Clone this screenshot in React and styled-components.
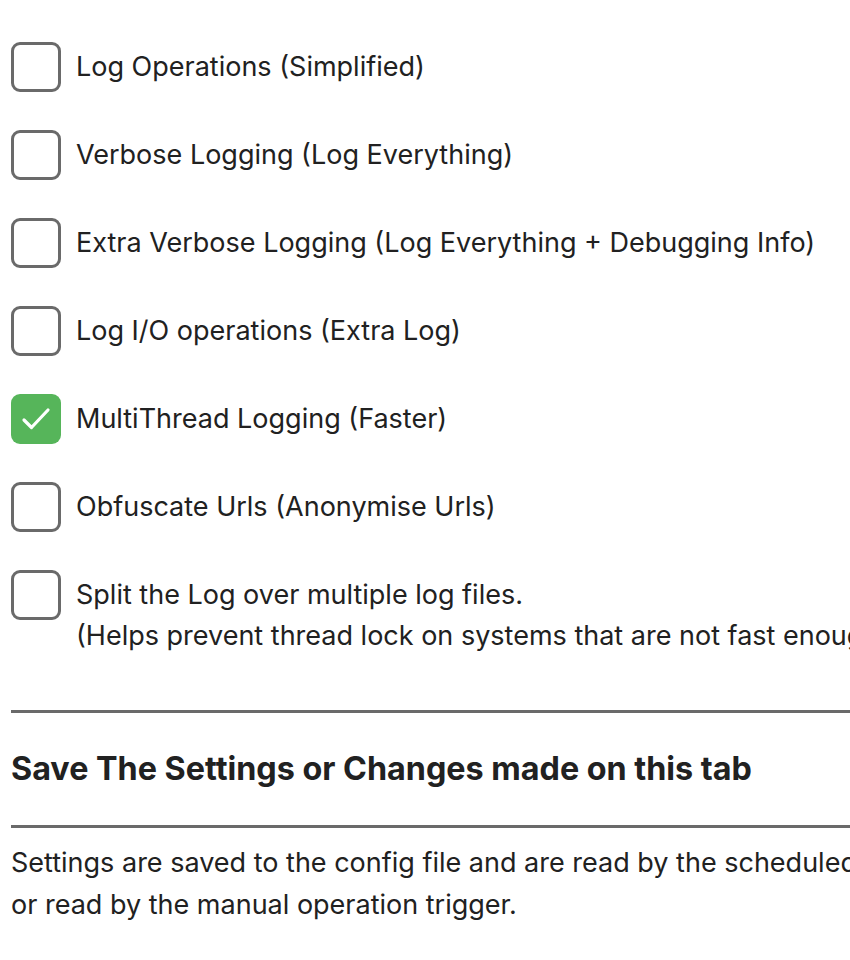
import React from "react"
import styled, { createGlobalStyle } from "styled-components"

const Global = createGlobalStyle`
  html, body {
    margin: 0;
    padding: 0;
    overflow: hidden;
    background: #fff;
  }
  body {
    font-family: Inter, "Noto Sans", "Liberation Sans", sans-serif;
    color: #212121;
  }
`

const Page = styled.div`
  width: 1300px;
  padding: 42px 0 0 11px;
`

const Options = styled.div`
  display: grid;
  grid-gap: 38px;
`

const Row = styled.label`
  display: flex;
  align-items: flex-start;
  gap: 15px;
`

const Box = styled.span`
  flex: none;
  box-sizing: border-box;
  width: 50px;
  height: 50px;
  border-radius: 9px;
  border: ${(p) => (p.checked ? "none" : "3px solid #6a6a6a")};
  background: ${(p) => (p.checked ? "#56b55a" : "#fff")};
  display: flex;
  align-items: center;
  justify-content: center;
`

const Text = styled.span`
  font-size: 27px;
  line-height: 41px;
  padding-top: 4px;
  white-space: nowrap;
`

const Rule = styled.hr`
  margin: ${(p) => (p.spaced ? "54px 0 0" : "0")};
  border: none;
  height: 3px;
  background: #6a6a6a;
`

const Heading = styled.h2`
  margin: 0;
  font-size: 32.3px;
  font-weight: 700;
  line-height: 112px;
`

const Para = styled.p`
  margin: 14px 0 0;
  font-size: 27px;
  line-height: 42px;
`

const Check = () => (
  <svg width="34" height="34" viewBox="0 0 34 34" fill="none">
    <path
      d="M5 18l7.5 7.5L29 8"
      stroke="#fff"
      strokeWidth="3.2"
      strokeLinecap="round"
      strokeLinejoin="round"
    />
  </svg>
)

const options = [
  { label: "Log Operations (Simplified)" },
  { label: "Verbose Logging (Log Everything)" },
  { label: "Extra Verbose Logging (Log Everything + Debugging Info)" },
  { label: "Log I/O operations (Extra Log)" },
  { label: "MultiThread Logging (Faster)", checked: true },
  { label: "Obfuscate Urls (Anonymise Urls)" },
  {
    label: "Split the Log over multiple log files.",
    note: "(Helps prevent thread lock on systems that are not fast enough to write the log)",
  },
]

export default function App() {
  return (
    <Page>
      <Global />
      <Options>
        {options.map((o) => (
          <Row key={o.label}>
            <Box checked={o.checked}>{o.checked && <Check />}</Box>
            <Text>
              {o.label}
              {o.note && (
                <>
                  <br />
                  {o.note}
                </>
              )}
            </Text>
          </Row>
        ))}
      </Options>
      <Rule spaced />
      <Heading>Save The Settings or Changes made on this tab</Heading>
      <Rule />
      <Para>
        Settings are saved to the config file and are read by the scheduled task
        <br />
        or read by the manual operation trigger.
      </Para>
    </Page>
  )
}
